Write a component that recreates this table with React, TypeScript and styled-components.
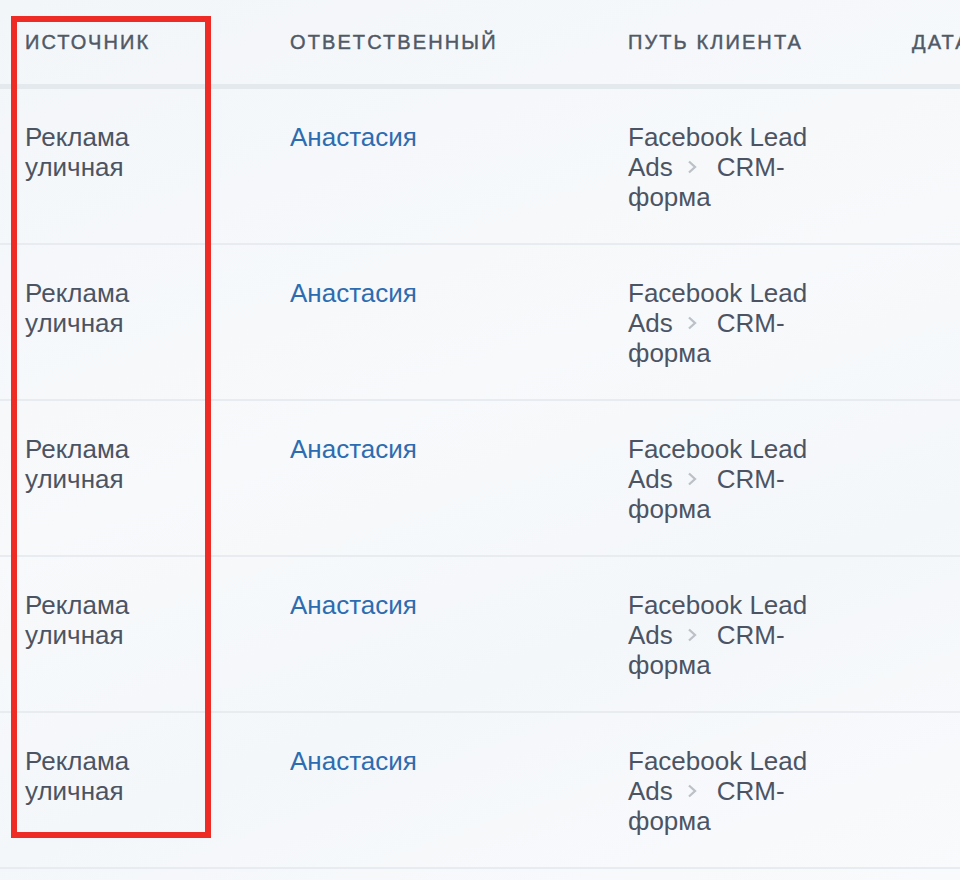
import { FC } from 'react';
import styled, { createGlobalStyle } from 'styled-components';

const GlobalStyle = createGlobalStyle`
  html, body {
    margin: 0;
    padding: 0;
  }
  body {
    width: 960px;
    height: 880px;
    overflow: hidden;
    background: linear-gradient(160deg, #f3f6f9 0%, #f7f9fb 45%, #f4f7fa 70%, #f9fafc 100%);
    font-family: 'Liberation Sans', Arial, sans-serif;
  }
`;

const Page = styled.div`
  position: relative;
  width: 960px;
  height: 880px;
  overflow: hidden;
`;

const Table = styled.div`
  display: grid;
  grid-template-columns: 265px 338px 284px 240px;
  padding-left: 25px;
`;

const Row = styled.div`
  display: contents;
`;

const HeadCell = styled.div<{ first?: boolean }>`
  height: 89px;
  box-sizing: border-box;
  padding-top: 32px;
  border-bottom: 5px solid #e4e9ee;
  margin-left: ${(p) => (p.first ? '-25px' : '0')};
  padding-left: ${(p) => (p.first ? '25px' : '0')};
  font-family: 'Liberation Sans', Arial, sans-serif;
  font-weight: 400;
  font-size: 20px;
  line-height: 20px;
  letter-spacing: 2.1px;
  color: #505966;
  text-transform: uppercase;
  white-space: nowrap;
  -webkit-text-stroke: 0.45px #505966;
`;

const Cell = styled.div<{ first?: boolean }>`
  box-sizing: border-box;
  height: 156px;
  padding-top: 33px;
  border-bottom: 2px solid #e8ecf0;
  margin-left: ${(p) => (p.first ? '-25px' : '0')};
  padding-left: ${(p) => (p.first ? '25px' : '0')};
  font-size: 26px;
  line-height: 30px;
  color: #4c5463;
`;

const Text = styled.div`
  width: 190px;
`;

const Link = styled.a`
  color: #2d6cb0;
  text-decoration: none;
`;

const Chevron = styled.svg`
  display: inline-block;
  width: 10px;
  height: 14px;
  margin: 0 20px 0 14px;
  vertical-align: 2px;
`;

const Highlight = styled.div`
  position: absolute;
  left: 11px;
  top: 16px;
  width: 200px;
  height: 822px;
  box-sizing: border-box;
  border: 6px solid #ee2b24;
  pointer-events: none;
`;

const rows = [1, 2, 3, 4, 5];

const App: FC = () => (
  <Page>
    <GlobalStyle />
    <Table>
      <Row>
        <HeadCell first>Источник</HeadCell>
        <HeadCell>Ответственный</HeadCell>
        <HeadCell>Путь клиента</HeadCell>
        <HeadCell>Дата</HeadCell>
      </Row>
      {rows.map((r) => (
        <Row key={r}>
          <Cell first>
            <Text>Реклама уличная</Text>
          </Cell>
          <Cell>
            <Link href="#">Анастасия</Link>
          </Cell>
          <Cell>
            <Text>
              Facebook Lead Ads
              <Chevron viewBox="0 0 10 14">
                <path d="M2 1.5 L8 7 L2 12.5" fill="none" stroke="#bcc1c8" strokeWidth="2.3" />
              </Chevron>
              CRM-форма
            </Text>
          </Cell>
          <Cell />
        </Row>
      ))}
    </Table>
    <Highlight />
  </Page>
);

export default App;
